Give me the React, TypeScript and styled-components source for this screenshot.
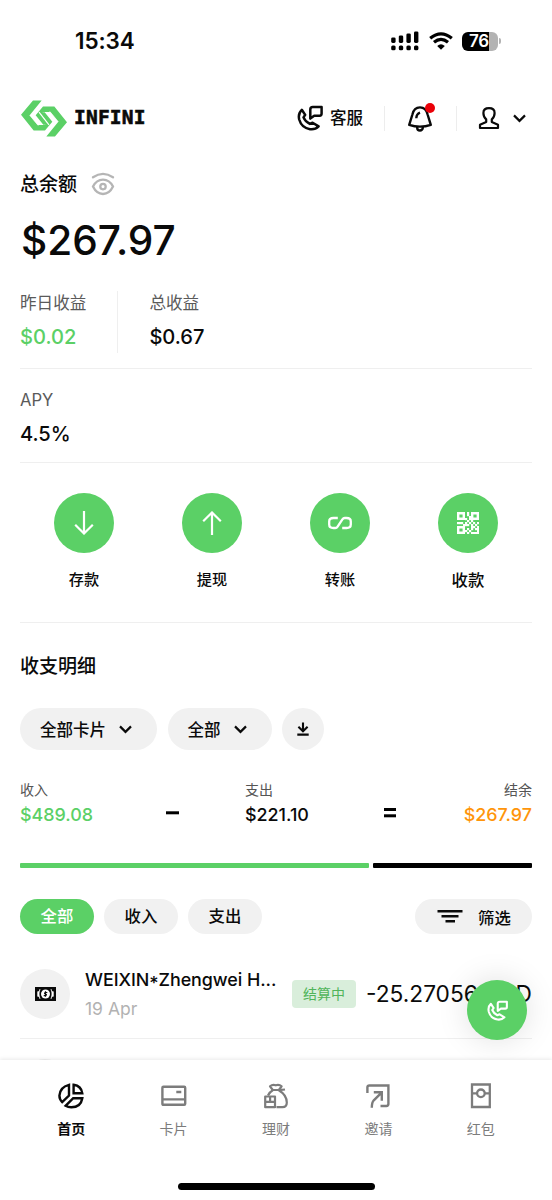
import React from "react";
import styled, { createGlobalStyle } from "styled-components";

const GREEN = "#5bd066";
const SANS = '"Inter", "Noto Sans CJK SC", sans-serif';

const Global = createGlobalStyle`
  * { box-sizing: border-box; }
  html, body { margin: 0; padding: 0; background: #fff; }
  body { font-family: ${SANS}; color: #0a0a0a; overflow: hidden; }
  button { font: inherit; color: inherit; border: 0; background: none; padding: 0; margin: 0; }
  svg { display: block; flex: none; }
`;

const Screen = styled.div`
  position: relative;
  width: 552px;
  height: 1200px;
  overflow: hidden;
  background: #fff;
  display: flex;
  flex-direction: column;
`;

const StatusBar = styled.header`
  height: 82px;
  flex: none;
  display: flex;
  align-items: center;
  justify-content: space-between;
  padding: 0 51px 0 75px;
`;

const Clock = styled.time`
  font-size: 22.5px;
  font-weight: 600;
  line-height: 28px;
  letter-spacing: -0.1px;
`;

const StatusIcons = styled.div`
  display: flex;
  align-items: center;
  gap: 9.5px;
`;

const Battery = styled.div`
  display: flex;
  align-items: center;
  gap: 1px;
`;

const BatteryBody = styled.div`
  width: 36px;
  height: 19px;
  padding-right: 2px;
  border-radius: 6px;
  background: linear-gradient(90deg, #000 76%, #b3b3b3 76%);
  color: #fff;
  font-size: 17px;
  font-weight: 600;
  line-height: 19px;
  text-align: center;
  letter-spacing: -0.3px;
`;

const BatteryTip = styled.div`
  width: 2px;
  height: 6px;
  border-radius: 0 2px 2px 0;
  background: #b3b3b3;
`;

const TopBar = styled.div`
  height: 72px;
  flex: none;
  display: flex;
  align-items: center;
  padding: 0 26px 0 20px;
`;

const Brand = styled.div`
  display: flex;
  align-items: center;
  gap: 6px;
  flex: 1;
`;

const BrandName = styled.span`
  font-family: "DejaVu Sans Mono", "Liberation Mono", monospace;
  font-weight: 700;
  font-size: 19.5px;
  line-height: 24px;
  letter-spacing: 0.2px;
  -webkit-text-stroke: 0.6px #0a0a0a;
`;

const HelpButton = styled.button`
  display: flex;
  align-items: center;
  gap: 7px;
  font-size: 16.5px;
  font-weight: 500;
  line-height: 24px;
`;

const TopDivider = styled.span<{ $left: number; $right: number }>`
  width: 1px;
  height: 25px;
  background: #ededed;
  margin: 0 ${(p) => p.$right}px 0 ${(p) => p.$left}px;
`;

const BellButton = styled.button`
  position: relative;
`;

const AlertDot = styled.span`
  position: absolute;
  top: -2px;
  right: -2px;
  width: 10px;
  height: 10px;
  border-radius: 50%;
  background: #ea0008;
`;

const AccountButton = styled.button`
  display: flex;
  align-items: center;
  gap: 13px;
`;

const Content = styled.main`
  flex: none;
  padding: 0 20px;
`;

const BalanceLabel = styled.div`
  height: 60px;
  display: flex;
  align-items: center;
  gap: 14px;
`;

const BalanceText = styled.span`
  padding-top: 2px;
  font-size: 19px;
  font-weight: 500;
  line-height: 28px;
`;

const BalanceAmount = styled.div`
  height: 52px;
  font-size: 40.6px;
  font-weight: 500;
  line-height: 54px;
  padding-left: 1px;
`;

const Stats = styled.section<{ $height: number; $top: number }>`
  height: ${(p) => p.$height}px;
  padding-top: ${(p) => p.$top}px;
  display: flex;
  border-bottom: 1px solid #efefef;
`;

const Stat = styled.div<{ $divided?: boolean }>`
  height: 62px;
  padding-right: 31px;
  margin-right: 31px;
  border-right: 1px solid ${(p) => (p.$divided ? "#efefef" : "transparent")};
`;

const StatLabel = styled.div`
  font-size: 16.6px;
  line-height: 25px;
  color: #5a5a5a;
`;

const StatValue = styled.div<{ $color?: string }>`
  margin-top: 8px;
  font-size: 20.1px;
  font-weight: 500;
  line-height: 26px;
  color: ${(p) => p.$color ?? "#0a0a0a"};
`;

const Actions = styled.nav`
  height: 160px;
  padding-top: 30px;
  display: grid;
  grid-template-columns: repeat(4, 1fr);
  border-bottom: 1px solid #efefef;
`;

const Action = styled.button`
  display: flex;
  flex-direction: column;
  align-items: center;
  justify-content: flex-start;
`;

const ActionCircle = styled.span`
  width: 60px;
  height: 60px;
  border-radius: 50%;
  background: ${GREEN};
  display: flex;
  align-items: center;
  justify-content: center;
`;

const ActionLabel = styled.span<{ $large?: boolean }>`
  margin-top: 15px;
  font-size: ${(p) => (p.$large ? 16.4 : 15.2)}px;
  font-weight: 500;
  line-height: 24px;
`;

const SectionTitle = styled.h2`
  margin: 0;
  height: 85px;
  font-size: 19px;
  font-weight: 500;
  line-height: 87px;
`;

const Filters = styled.div`
  display: flex;
  gap: 10.5px;
`;

const Select = styled.button<{ $width: number }>`
  width: ${(p) => p.$width}px;
  height: 42px;
  border-radius: 21px;
  background: #f1f1f1;
  display: flex;
  align-items: center;
  gap: 13px;
  padding-left: 20px;
  font-size: 16.5px;
  font-weight: 500;
`;

const RoundButton = styled.button`
  width: 42px;
  height: 42px;
  border-radius: 50%;
  background: #f1f1f1;
  display: flex;
  align-items: center;
  justify-content: center;
`;

const Summary = styled.section`
  height: 86px;
  margin-top: 27px;
  display: grid;
  grid-template-columns: 144px 81px 137px 1fr auto;
`;

const SummaryItem = styled.div<{ $end?: boolean }>`
  text-align: ${(p) => (p.$end ? "right" : "left")};
`;

const SummaryLabel = styled.div`
  font-size: 14px;
  line-height: 25px;
  color: #555;
`;

const SummaryValue = styled.div<{ $color?: string }>`
  font-size: 17.9px;
  font-weight: 500;
  line-height: 26px;
  color: ${(p) => p.$color ?? "#0a0a0a"};
`;

const Operator = styled.div`
  padding: 31px 0 0 2px;
`;

const Ratio = styled.div`
  display: flex;
  gap: 4px;
  height: 5px;
`;

const RatioPart = styled.span<{ $grow: number; $color: string }>`
  flex: ${(p) => p.$grow} 1 0;
  border-radius: 1px;
  background: ${(p) => p.$color};
`;

const Tabs = styled.div`
  margin-top: 31px;
  display: flex;
  gap: 10px;
`;

const Tab = styled.button<{ $active?: boolean }>`
  width: 74px;
  height: 35px;
  border-radius: 18px;
  background: ${(p) => (p.$active ? GREEN : "#f1f1f1")};
  color: ${(p) => (p.$active ? "#fff" : "#0a0a0a")};
  font-size: 16.4px;
  font-weight: 500;
  line-height: 24px;
  padding-bottom: 1px;
`;

const FilterButton = styled.button`
  margin-left: auto;
  width: 117px;
  height: 35px;
  border-radius: 18px;
  background: #f1f1f1;
  display: flex;
  align-items: center;
  gap: 15px;
  padding-left: 22px;
  font-size: 16.4px;
  font-weight: 500;
`;

const Transactions = styled.section`
  padding-top: 15px;
`;

const Transaction = styled.article`
  height: 90px;
  display: flex;
  align-items: center;
  border-bottom: 1px solid #efefef;
`;

const TxIcon = styled.span`
  width: 50px;
  height: 50px;
  flex: none;
  border-radius: 50%;
  background: #f1f1f1;
  display: flex;
  align-items: center;
  justify-content: center;
`;

const TxInfo = styled.div`
  width: 192px;
  margin: 0 15px;
  padding-top: 2px;
`;

const TxTitle = styled.div`
  font-size: 17.9px;
  font-weight: 500;
  line-height: 28px;
  letter-spacing: -0.05px;
  white-space: nowrap;
`;

const Star = styled.span`
  vertical-align: -3px;
  line-height: 1;
`;

const TxDate = styled.div`
  margin-top: 1px;
  font-size: 17.5px;
  line-height: 28px;
  color: #b2b2b2;
`;

const TxStatus = styled.span`
  width: 64px;
  height: 28px;
  flex: none;
  border-radius: 4px;
  background: #d9eedb;
  color: #50b45a;
  font-size: 14px;
  line-height: 28px;
  text-align: center;
`;

const TxAmount = styled.span`
  margin-left: auto;
  font-size: 22.7px;
  line-height: 30px;
  white-space: nowrap;
`;

const SupportButton = styled.button`
  position: absolute;
  left: 467px;
  top: 980px;
  width: 60px;
  height: 60px;
  border-radius: 50%;
  background: ${GREEN};
  box-shadow: 0 0 32px rgba(0, 0, 0, 0.13);
  display: flex;
  align-items: center;
  justify-content: center;
`;

const BottomBar = styled.footer`
  position: absolute;
  left: 0;
  right: 0;
  bottom: 0;
  height: 140px;
  background: #fff;
  box-shadow: 0 -1px 4px rgba(0, 0, 0, 0.09);
  display: flex;
  flex-direction: column;
  align-items: center;
`;

const NavItems = styled.nav`
  width: 512px;
  height: 123px;
  padding-top: 22px;
  display: grid;
  grid-template-columns: repeat(5, 1fr);
`;

const NavItem = styled.button<{ $active?: boolean }>`
  display: flex;
  flex-direction: column;
  align-items: center;
  justify-content: flex-start;
  gap: 7px;
  color: ${(p) => (p.$active ? "#0a0a0a" : "#7c7c7c")};
  font-size: 14px;
  font-weight: ${(p) => (p.$active ? 600 : 400)};
  line-height: 24px;
`;

const HomeIndicator = styled.div`
  width: 197px;
  height: 7px;
  border-radius: 4px;
  background: #000;
`;

const SignalIcon = () => (
  <svg width="28" height="20" viewBox="0 0 28 20">
    {[0, 1, 2, 3].map((i) => (
      <g key={i}>
        <rect x={0.2 + i * 7.6} y={6.4 - i * 2} width="4.4" height={5.6 + i * 2} rx="1.4" />
        <rect x={0.2 + i * 7.6} y="14.4" width="4.4" height="4.8" rx="1.5" />
      </g>
    ))}
  </svg>
);

const WifiIcon = () => (
  <svg width="24" height="18" viewBox="0 0 24 18" fill="none" stroke="#000" strokeWidth="3.2">
    <path d="M1.2 6.3Q12-2.6 22.8 6.3M5 10.3Q12 4.4 19 10.3" />
    <path d="M12 17.7L8.2 13.9Q12 10.6 15.8 13.9Z" fill="#000" stroke="none" />
  </svg>
);

const LOGO_HALF =
  "M98 270H124L88 314L112 343.5H134L141 336L120 309L124 305H133L156 334L134 360H100L62 313Z";

const LogoIcon = () => (
  <svg width="48" height="37" viewBox="59 268.5 144 111" fill={GREEN}>
    <path d={LOGO_HALF} />
    <path d={LOGO_HALF} transform="rotate(180 131 324)" />
    <path d="M88 314L114 345.500M174 334L148 302.500" fill="none" stroke="#fff" strokeWidth="2" />
    <path d="M116 305L146 343" fill="none" stroke="#fff" strokeWidth="3.500" />
  </svg>
);

const PhoneIcon = ({ size, color, stroke = 2.5 }: { size: number; color: string; stroke?: number }) => (
  <svg width={size} height={size} viewBox="0 0 26 26" fill="none" stroke={color} strokeWidth={stroke} strokeLinejoin="round">
    <path d="M4.8 4.8L8.2 9.9L6.5 12.4Q8.3 16.8 12.8 18.9L15.6 17.7L21.6 21.4Q18 25 13 24.2Q4.5 22.7 2.2 14.5Q.8 8.5 4.8 4.8Z" />
    <path d="M13.3 13.6V4.6Q13.3 2.1 15.8 2.1H24.6V8.6Q24.6 10.7 22.6 10.7H17.2Z" />
  </svg>
);

const BellIcon = () => (
  <svg width="26" height="27" viewBox="0 0 26 27" fill="none" stroke="#0a0a0a" strokeWidth="2.4" strokeLinejoin="round">
    <path d="M2.2 19.8L5.4 9.5Q7 2.4 13 2.4Q19 2.4 20.6 9.5L23.8 19.8Q18.5 21.6 13 21.6Q7.5 21.6 2.2 19.8Z" />
    <path d="M10.2 21.7V22.7A2.8 2.8 0 0 0 15.8 22.7V21.7M9.3 13.3Q9.5 8.9 13 7.7" />
  </svg>
);

const UserIcon = () => (
  <svg width="22" height="24" viewBox="0 0 22 24" fill="none" stroke="#0a0a0a" strokeWidth="2.2" strokeLinejoin="round">
    <path d="M8.2 13.4Q5.4 11 5.4 7Q5.4 2.2 11 2.2Q16.6 2.2 16.6 7Q16.6 11 13.8 13.4V16L20 18.8V22H2V18.8L8.2 16Z" />
  </svg>
);

const ChevronIcon = () => (
  <svg width="13" height="9" viewBox="0 0 13 9" fill="none" stroke="#0a0a0a" strokeWidth="2.2">
    <path d="M1 1.4L6.5 6.9L12 1.4" />
  </svg>
);

const EyeIcon = () => (
  <svg width="24" height="24" viewBox="0 0 24 24" fill="none" stroke="#b5b5b5" strokeWidth="2.3" strokeLinecap="round">
    <path d="M2 5.3Q12-1.4 22 5.3M2 14.6Q5.5 7.7 12 7.7T22 14.6Q18.5 22 12 22T2 14.6Z" />
    <circle cx="12" cy="14.6" r="2.7" />
  </svg>
);

const ArrowIcon = ({ up }: { up?: boolean }) => (
  <svg width="20" height="24" viewBox="0 0 20 24" fill="none" stroke="#fff" strokeWidth="2.2">
    <path d={up ? "M10 24V1.5M1.2 10.2L10 1.5L18.8 10.2" : "M10 0V22.5M1.2 13.8L10 22.5L18.8 13.8"} />
  </svg>
);

const LinkIcon = () => (
  <svg width="24" height="14" viewBox="0 0 24 14" fill="none" stroke="#fff" strokeWidth="2.3">
    <path d="M9.8 2H5.4Q1.2 2 1.2 5.5V8.5Q1.2 12 5.4 12H7.3Q8.7 12 9.600 10.600L14.400 3.400Q15.300 2 16.700 2H18.600Q22.800 2 22.800 5.500V8.500Q22.800 12 18.600 12H14.200" />
  </svg>
);

const QR_DOTS = [
  [10, 0], [10, 2], [12, 4], [8, 6], [12, 6], [0, 10], [4, 10], [8, 10], [10, 8], [12, 10], [10, 12], [16, 10],
  [20, 10], [14, 8], [14, 12], [18, 12], [8, 12], [10, 16], [8, 18], [10, 20], [12, 18], [14, 14], [16, 14],
  [18, 16], [20, 14], [20, 16], [20, 18], [20, 20], [18, 20], [16, 20], [14, 20], [14, 16], [2, 10], [6, 12],
];

const QrIcon = () => (
  <svg width="22" height="22" viewBox="0 0 22 22" fill="#fff">
    <path d="M1.2 1.2H6.8V6.8H1.2ZM15.2 1.2H20.8V6.8H15.2ZM1.2 15.2H6.8V20.8H1.2Z" fill="none" stroke="#fff" strokeWidth="2.4" />
    {QR_DOTS.map(([x, y]) => (
      <rect key={`${x}-${y}`} x={x} y={y} width="2.2" height="2.2" />
    ))}
  </svg>
);

const DownloadIcon = () => (
  <svg width="12" height="14" viewBox="0 0 12 14" fill="none" stroke="#0a0a0a" strokeWidth="2.1">
    <path d="M6 0.5V9M1.4 4.8L6 9.3L10.6 4.8M.3 12.6H11.7" />
  </svg>
);

const MinusIcon = () => (
  <svg width="13" height="10" viewBox="0 0 13 10">
    <rect y="3.3" width="13" height="3" />
  </svg>
);

const EqualsIcon = () => (
  <svg width="12" height="10" viewBox="0 0 12 10">
    <rect width="12" height="3" />
    <rect y="6.3" width="12" height="3" />
  </svg>
);

const FilterIcon = () => (
  <svg width="26" height="13" viewBox="0 0 26 13" fill="#0a0a0a">
    <rect x="0.5" width="25" height="2.5" />
    <rect x="4.5" y="5" width="17" height="2.5" />
    <rect x="8.5" y="10" width="9.5" height="2.5" />
  </svg>
);

const CashIcon = () => (
  <svg width="21" height="14" viewBox="0 0 21 14" fill="none">
    <rect width="21" height="14" fill="#0a0a0a" />
    <path d="M4.3 2.2V3.5Q3.8 4.4 2.3 4.5V9.5Q3.8 9.6 4.3 10.5V11.8H5.5Q3.3 7 5.5 2.2ZM16.7 2.2V3.5Q17.2 4.4 18.7 4.5V9.5Q17.2 9.6 16.7 10.5V11.8H15.5Q17.7 7 15.5 2.2Z" fill="#fff" />
    <circle cx="10.5" cy="7" r="4.5" fill="#fff" />
    <path d="M12.3 5.5H10.2Q8.8 6.5 10.5 7T10.8 8.6H8.7M10.5 4.2V9.8" stroke="#0a0a0a" strokeWidth="1.2" />
  </svg>
);

const PieIcon = () => (
  <svg width="26" height="28" viewBox="0 0 26 28" fill="none" stroke="currentColor" strokeWidth="2.4" strokeLinejoin="miter">
    <path d="M11 2.8V13.6L4.2 20.2Q1.4 17.5 1.4 13.6Q2 5 11 2.8Z" />
    <path d="M15.6 2.8Q23.3 4 24.3 11.3H15.6Z" />
    <path d="M24.3 16.2Q22.8 25.3 13.3 25.3Q10 25.3 7.6 23.8L15.2 16.2Z" />
  </svg>
);

const CardIcon = () => (
  <svg width="26" height="28" viewBox="0 0 26 28" fill="none" stroke="currentColor" strokeWidth="2.4">
    <path d="M2.4 4.8H23.2Q24.2 4.8 24.2 5.8V21.8Q24.2 22.8 23.2 22.8H2.4Q1.4 22.8 1.4 21.8V5.8Q1.4 4.8 2.4 4.8ZM1.4 17.4H24.2M15.3 10H20.3" />
  </svg>
);

const BagIcon = () => (
  <svg width="26" height="28" viewBox="0 0 26 28" fill="none" stroke="currentColor" strokeWidth="2.2" strokeLinejoin="round">
    <path d="M7 4.4Q9.5 2.2 12.8 3.3Q16.2 2.2 18.6 4.4L15.8 8H9.8ZM9.8 8.2Q6.5 10 5 13.5M15.8 8.2L22 7.5M15.8 8.2Q23.8 13 23.8 20.5Q23.8 25.2 19.5 25.2H13.5" />
    <path d="M2.2 14.5H12V25.2H2.2ZM2.2 19.8H12M7.1 14.5V19.8" />
  </svg>
);

const InviteIcon = () => (
  <svg width="26" height="28" viewBox="0 0 26 28" fill="none" stroke="currentColor" strokeWidth="2.4">
    <path d="M2.4 11V5.3Q2.4 3.5 4.3 3.5H23.4V22.1Q23.4 24 21.4 24H15.5M8.8 10.3H16.8V18.8M16.8 10.3L8.8 18.3Q6.8 20.5 6.8 25.8" />
  </svg>
);

const EnvelopeIcon = () => (
  <svg width="26" height="28" viewBox="0 0 26 28" fill="none" stroke="currentColor" strokeWidth="2.3">
    <path d="M4 2.5H21.8V25H4ZM4 11.3H9M17 11.3H21.8" />
    <circle cx="12.9" cy="11.3" r="3.8" />
  </svg>
);

export default function App() {
  return (
    <>
      <Global />
      <Screen>
        <StatusBar>
          <Clock>15:34</Clock>
          <StatusIcons>
            <SignalIcon />
            <WifiIcon />
            <Battery>
              <BatteryBody>76</BatteryBody>
              <BatteryTip />
            </Battery>
          </StatusIcons>
        </StatusBar>

        <TopBar>
          <Brand>
            <LogoIcon />
            <BrandName>INFINI</BrandName>
          </Brand>
          <HelpButton>
            <PhoneIcon size={26} color="#0a0a0a" />
            客服
          </HelpButton>
          <TopDivider $left={21} $right={22} />
          <BellButton>
            <BellIcon />
            <AlertDot />
          </BellButton>
          <TopDivider $left={23} $right={21} />
          <AccountButton>
            <UserIcon />
            <ChevronIcon />
          </AccountButton>
        </TopBar>

        <Content>
          <BalanceLabel>
            <BalanceText>总余额</BalanceText>
            <EyeIcon />
          </BalanceLabel>
          <BalanceAmount>$267.97</BalanceAmount>

          <Stats $height={103} $top={25}>
            <Stat $divided>
              <StatLabel>昨日收益</StatLabel>
              <StatValue $color={GREEN}>$0.02</StatValue>
            </Stat>
            <Stat>
              <StatLabel>总收益</StatLabel>
              <StatValue>$0.67</StatValue>
            </Stat>
          </Stats>
          <Stats $height={94} $top={19}>
            <Stat>
              <StatLabel>APY</StatLabel>
              <StatValue>4.5%</StatValue>
            </Stat>
          </Stats>

          <Actions>
            <Action>
              <ActionCircle><ArrowIcon /></ActionCircle>
              <ActionLabel>存款</ActionLabel>
            </Action>
            <Action>
              <ActionCircle><ArrowIcon up /></ActionCircle>
              <ActionLabel>提现</ActionLabel>
            </Action>
            <Action>
              <ActionCircle><LinkIcon /></ActionCircle>
              <ActionLabel>转账</ActionLabel>
            </Action>
            <Action>
              <ActionCircle><QrIcon /></ActionCircle>
              <ActionLabel $large>收款</ActionLabel>
            </Action>
          </Actions>

          <SectionTitle>收支明细</SectionTitle>
          <Filters>
            <Select $width={137}>全部卡片<ChevronIcon /></Select>
            <Select $width={104}>全部<ChevronIcon /></Select>
            <RoundButton><DownloadIcon /></RoundButton>
          </Filters>

          <Summary>
            <SummaryItem>
              <SummaryLabel>收入</SummaryLabel>
              <SummaryValue $color={GREEN}>$489.08</SummaryValue>
            </SummaryItem>
            <Operator><MinusIcon /></Operator>
            <SummaryItem>
              <SummaryLabel>支出</SummaryLabel>
              <SummaryValue>$221.10</SummaryValue>
            </SummaryItem>
            <Operator><EqualsIcon /></Operator>
            <SummaryItem $end>
              <SummaryLabel>结余</SummaryLabel>
              <SummaryValue $color="#ff950a">$267.97</SummaryValue>
            </SummaryItem>
          </Summary>

          <Ratio>
            <RatioPart $grow={489.08} $color={GREEN} />
            <RatioPart $grow={223} $color="#000" />
          </Ratio>

          <Tabs>
            <Tab $active>全部</Tab>
            <Tab>收入</Tab>
            <Tab>支出</Tab>
            <FilterButton><FilterIcon />筛选</FilterButton>
          </Tabs>

          <Transactions>
            <Transaction>
              <TxIcon><CashIcon /></TxIcon>
              <TxInfo>
                <TxTitle>WEIXIN<Star>*</Star>Zhengwei H...</TxTitle>
                <TxDate>19 Apr</TxDate>
              </TxInfo>
              <TxStatus>结算中</TxStatus>
              <TxAmount>-25.27056 USD</TxAmount>
            </Transaction>
            <Transaction>
              <TxIcon />
            </Transaction>
          </Transactions>
        </Content>

        <SupportButton><PhoneIcon size={21} color="#fff" stroke={2.6} /></SupportButton>

        <BottomBar>
          <NavItems>
            <NavItem $active><PieIcon />首页</NavItem>
            <NavItem><CardIcon />卡片</NavItem>
            <NavItem><BagIcon />理财</NavItem>
            <NavItem><InviteIcon />邀请</NavItem>
            <NavItem><EnvelopeIcon />红包</NavItem>
          </NavItems>
          <HomeIndicator />
        </BottomBar>
      </Screen>
    </>
  );
}
